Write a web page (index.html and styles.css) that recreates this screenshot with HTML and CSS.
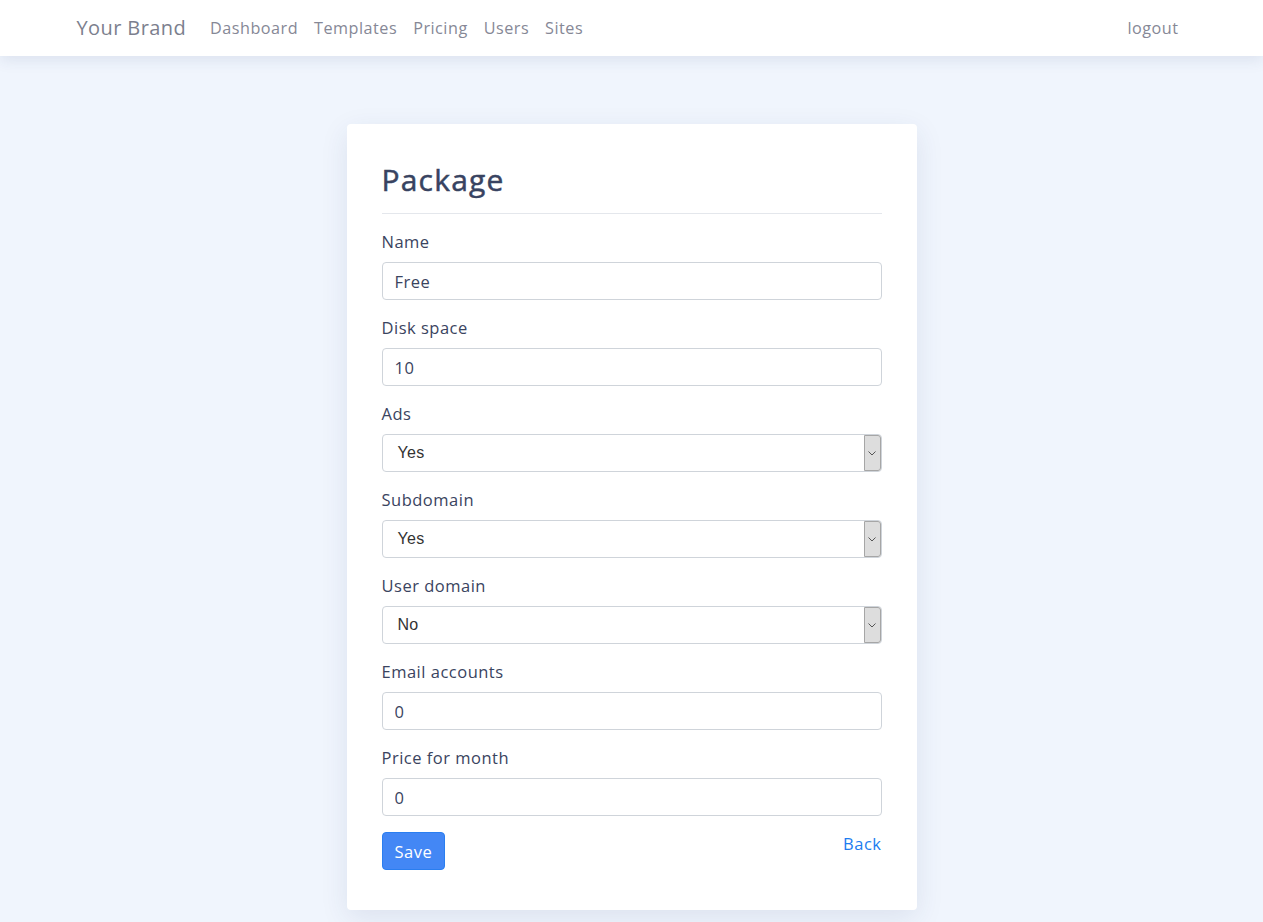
FILE: index.html
```html
<!DOCTYPE html>
<html lang="en">
<head>
<meta charset="utf-8">
<title>Package</title>
<link rel="stylesheet" href="styles.css">
</head>
<body>
<header class="navbar">
  <div class="container nav-inner">
    <a class="brand" href="#">Your Brand</a>
    <nav class="nav-links">
      <a href="#">Dashboard</a>
      <a href="#">Templates</a>
      <a href="#">Pricing</a>
      <a href="#">Users</a>
      <a href="#">Sites</a>
    </nav>
    <a class="logout" href="#">logout</a>
  </div>
</header>
<main class="page">
  <section class="card">
    <h1 class="card-title">Package</h1>
    <form class="form">
      <div class="group">
        <label>Name</label>
        <input class="field" type="text" value="Free">
      </div>
      <div class="group">
        <label>Disk space</label>
        <input class="field" type="text" value="10">
      </div>
      <div class="group">
        <label>Ads</label>
        <div class="select"><span class="select-value">Yes</span><span class="caret"><svg width="8" height="5" viewBox="0 0 8 5"><path d="M0.5 0.5 L4 4 L7.5 0.5" fill="none" stroke="#555" stroke-width="1"/></svg></span></div>
      </div>
      <div class="group">
        <label>Subdomain</label>
        <div class="select"><span class="select-value">Yes</span><span class="caret"><svg width="8" height="5" viewBox="0 0 8 5"><path d="M0.5 0.5 L4 4 L7.5 0.5" fill="none" stroke="#555" stroke-width="1"/></svg></span></div>
      </div>
      <div class="group">
        <label>User domain</label>
        <div class="select"><span class="select-value">No</span><span class="caret"><svg width="8" height="5" viewBox="0 0 8 5"><path d="M0.5 0.5 L4 4 L7.5 0.5" fill="none" stroke="#555" stroke-width="1"/></svg></span></div>
      </div>
      <div class="group">
        <label>Email accounts</label>
        <input class="field" type="text" value="0">
      </div>
      <div class="group">
        <label>Price for month</label>
        <input class="field" type="text" value="0">
      </div>
      <div class="actions">
        <button class="btn" type="button">Save</button>
        <a class="back" href="#">Back</a>
      </div>
    </form>
  </section>
</main>
</body>
</html>
```

FILE: styles.css
```css
* { box-sizing: border-box; }
html, body { margin: 0; padding: 0; }
body {
  font-family: "Open Sans", "DejaVu Sans", sans-serif;
  background: #f0f5fd;
  color: #3a4460;
  font-size: 16px;
  letter-spacing: 0.5px;
  min-height: 922px;
}
a { text-decoration: none; }
.navbar {
  background: #fff;
  height: 56px;
  box-shadow: 0 4px 14px rgba(40, 60, 110, 0.10);
  position: relative;
}
.container {
  width: 1140px;
  margin: 0 auto;
  padding: 0 15px;
}
.nav-inner {
  display: flex;
  align-items: center;
  height: 56px;
  padding-bottom: 1px;
}
.brand {
  color: #7c7f8e;
  font-size: 20px;
  letter-spacing: 0.4px;
  margin-right: 16px;
}
.nav-links {
  display: flex;
  flex: 1;
}
.nav-links a, .logout {
  color: #868896;
  font-size: 16.2px;
  padding: 0 8px;
}
.page {
  padding: 68px 0 12px;
}
.card {
  width: 570px;
  margin: 0 auto;
  background: #fff;
  border-radius: 4px;
  padding: 38px 35px 40px;
  box-shadow: 0 8px 28px rgba(40, 60, 110, 0.10);
}
.card-title {
  margin: 0;
  font-size: 30px;
  font-weight: 400;
  -webkit-text-stroke: 0.5px #384361;
  letter-spacing: 1.2px;
  line-height: 36px;
  color: #384361;
  padding-bottom: 15px;
  border-bottom: 1px solid #e4e7ec;
  margin-bottom: 16px;
}
.group {
  display: flex;
  flex-direction: column;
  margin-bottom: 16px;
}
.group label {
  font-size: 16.5px;
  line-height: 24px;
  color: #3a4460;
  margin-bottom: 8px;
}
.field {
  height: 38px;
  border: 1px solid #cfd4da;
  border-radius: 4px;
  padding: 0 12px;
  font-family: inherit;
  font-size: 16.5px;
  letter-spacing: 0.5px;
  color: #3a4460;
  background: #fff;
}
.select {
  height: 38px;
  border: 1px solid #cfd4da;
  border-radius: 4px;
  display: flex;
  align-items: stretch;
  background: #fff;
}
.select-value {
  flex: 1;
  display: flex;
  align-items: center;
  padding-left: 15px;
  font-family: "Liberation Sans", Arial, sans-serif;
  font-size: 16px;
  letter-spacing: 0.3px;
  color: #333;
}
.caret {
  width: 17px;
  background: #dddddd;
  border: 1px solid #a6a6a6;
  border-radius: 0 3px 3px 0;
  display: flex;
  align-items: center;
  justify-content: center;
}
.actions {
  display: flex;
  justify-content: space-between;
  align-items: flex-start;
}
.btn {
  height: 38px;
  padding: 0 12px;
  background: #4387f5;
  border: 1px solid #2a7ef0;
  border-radius: 4px;
  color: #fff;
  font-family: inherit;
  font-size: 16.5px;
  letter-spacing: 0.5px;
}
.back {
  color: #1c7cf0;
  font-size: 16.5px;
  line-height: 24px;
}
```
